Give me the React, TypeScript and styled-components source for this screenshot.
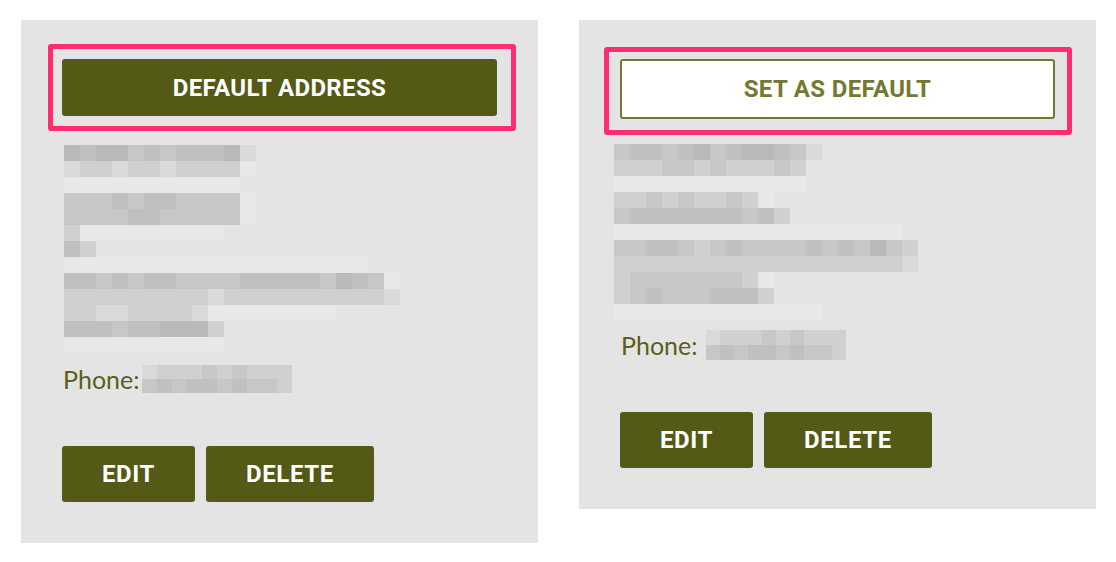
import React from "react";
import styled, { createGlobalStyle } from "styled-components";

const GlobalStyle = createGlobalStyle`
  body {
    margin: 0;
    background: #ffffff;
    font-family: "Lato", "Open Sans", sans-serif;
  }
`;

const Page = styled.div`
  display: flex;
  align-items: flex-start;
  gap: 41px;
  padding: 20px 0 0 21px;
`;

const Card = styled.div`
  box-sizing: border-box;
  width: 517px;
  background: #e4e4e4;
  padding: 0 41px 41px 41px;
  display: flex;
  flex-direction: column;
  align-items: stretch;
`;

const Highlight = styled.div<{ $margin: string; $pad: string }>`
  border: 5px solid #ff2d6f;
  border-radius: 3px;
  margin: ${(p) => p.$margin};
  padding: ${(p) => p.$pad};
`;

const WideButton = styled.button<{ $primary?: boolean }>`
  box-sizing: border-box;
  display: block;
  width: 100%;
  height: ${(p) => (p.$primary ? "57px" : "60px")};
  border-radius: 3px;
  border: ${(p) => (p.$primary ? "none" : "2px solid #737a2f")};
  background: ${(p) => (p.$primary ? "#545915" : "#ffffff")};
  color: ${(p) => (p.$primary ? "#ffffff" : "#737a2f")};
  font-family: "Roboto", "Liberation Sans", sans-serif;
  font-weight: 700;
  font-size: 24px;
  letter-spacing: 0.35px;
  cursor: pointer;
`;

const Mosaic = styled.div<{ $margin: string }>`
  display: flex;
  flex-direction: column;
  margin: ${(p) => p.$margin};
`;

const MosaicRow = styled.div<{ $h: number }>`
  display: flex;
  height: ${(p) => p.$h}px;
`;

const Cell = styled.span<{ $shade: string; $w: number }>`
  width: ${(p) => p.$w}px;
  height: 100%;
  background: ${(p) => p.$shade};
`;

const PhoneRow = styled.div<{ $top: number; $h: number }>`
  display: flex;
  align-items: center;
  margin-top: ${(p) => p.$top}px;
  height: ${(p) => p.$h}px;
`;

const PhoneLabel = styled.span`
  font-family: "Lato", "Open Sans", sans-serif;
  font-size: 25px;
  line-height: 28px;
  color: #5a6019;
  margin-left: 1px;
`;

const Actions = styled.div<{ $top: number }>`
  display: flex;
  gap: 11px;
  margin-top: ${(p) => p.$top}px;
`;

const ActionButton = styled.button`
  height: 56px;
  padding: 0 40px;
  border: none;
  border-radius: 3px;
  background: #545915;
  color: #ffffff;
  font-family: "Roboto", "Liberation Sans", sans-serif;
  font-weight: 700;
  font-size: 24px;
  letter-spacing: 0.6px;
  cursor: pointer;
`;

const shades: Record<string, string> = {
  a: "#b9b9b9",
  b: "#c0c0c0",
  c: "#c7c7c7",
  d: "#d0d0d0",
  e: "#dadada",
  f: "#e8e8e8",
  ".": "transparent",
};

type BlurProps = { rows: string[]; cell?: number; rowH?: number; margin: string };

// pixelated placeholder for the redacted address / phone data
const Blurred = ({ rows, cell = 16, rowH = 16, margin }: BlurProps) => (
  <Mosaic $margin={margin} aria-hidden>
    {rows.map((row, i) => (
      <MosaicRow key={i} $h={rowH}>
        {row.split("").map((ch, j) => (
          <Cell key={j} $w={cell} $shade={shades[ch] ?? "transparent"} />
        ))}
      </MosaicRow>
    ))}
  </Mosaic>
);

const leftAddress = [
  "abaacbcbbbae",
  "eddeddeddddf",
  "fffffffffff",
  "cccbcbbccccf",
  "ccccbbcccccf",
  "dfffffffff",
  "bd",
  "fffffffffffffffffff",
  "bbcbcbbccccbbbbbcabcf",
  "dddddddddedddddddddde",
  "ddeeddddeffffffff",
  "bbbcbbaaad",
  "ffffffffff",
];

const rightAddress = [
  "cbbcbacbaabce",
  "dddccdcdddcd",
  "ffffffffffff",
  "ddcdcddcdf",
  "cbbbbbbbcbd",
  "ffffffffffffffffff",
  "ccbbcdcbccccbcbcacd",
  "dddddddddddddddddde",
  "dcccccccdf",
  "dcbcccbbbd",
  "fffffffffffff",
];

const phoneBlur = ["edddcdcddd", "cbcbbcbccd"];

export default function App() {
  return (
    <>
      <GlobalStyle />
      <Page>
        <Card>
          <Highlight $margin="24px -19px 0 -14px" $pad="10px 14px 10px 9px">
            <WideButton $primary>DEFAULT ADDRESS</WideButton>
          </Highlight>
          <Blurred rows={leftAddress} margin="14px 0 0 2px" />
          <PhoneRow $top={12} $h={28}>
            <PhoneLabel>Phone:</PhoneLabel>
            <Blurred rows={phoneBlur} cell={15} rowH={14} margin="0 0 0 3px" />
          </PhoneRow>
          <Actions $top={53}>
            <ActionButton>EDIT</ActionButton>
            <ActionButton>DELETE</ActionButton>
          </Actions>
        </Card>
        <Card>
          <Highlight $margin="27px -17px 0 -16px" $pad="7px 12px 11px 11px">
            <WideButton>SET AS DEFAULT</WideButton>
          </Highlight>
          <Blurred rows={rightAddress} margin="9px 0 0 -6px" />
          <PhoneRow $top={10} $h={30}>
            <PhoneLabel>Phone:</PhoneLabel>
            <Blurred rows={phoneBlur} cell={14} rowH={15} margin="0 0 0 9px" />
          </PhoneRow>
          <Actions $top={52}>
            <ActionButton>EDIT</ActionButton>
            <ActionButton>DELETE</ActionButton>
          </Actions>
        </Card>
      </Page>
    </>
  );
}
